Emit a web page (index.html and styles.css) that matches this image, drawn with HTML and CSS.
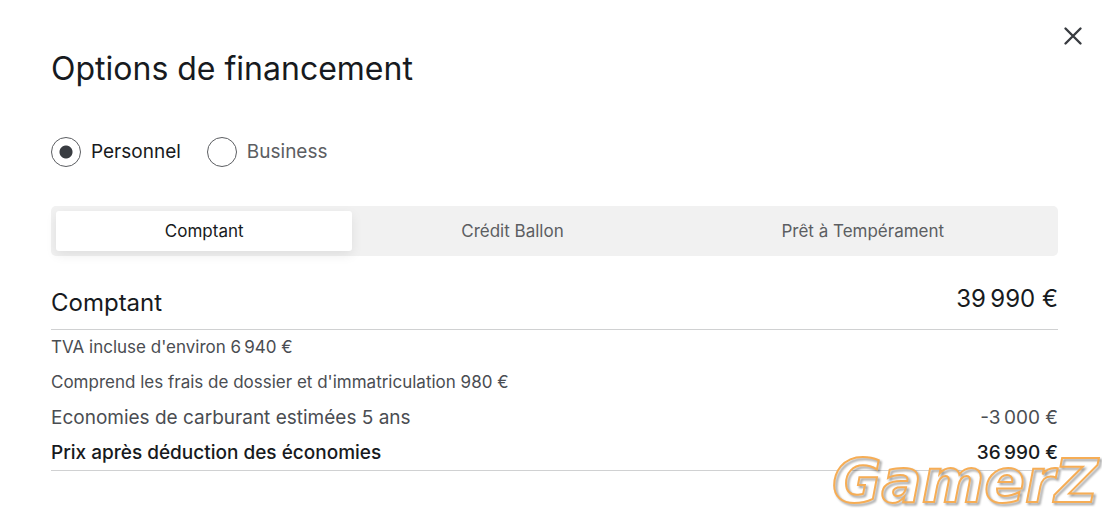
FILE: index.html
```html
<!DOCTYPE html>
<html lang="fr">
<head>
<meta charset="utf-8">
<meta name="viewport" content="width=device-width, initial-scale=1">
<title>Options de financement</title>
<link rel="stylesheet" href="styles.css">
</head>
<body>
<main class="modal">
  <button class="close" type="button" aria-label="Fermer">
    <svg viewBox="0 0 20 20" width="20" height="20" aria-hidden="true"><path d="M2.5 2.5 17.5 17.5M17.5 2.5 2.5 17.5"/></svg>
  </button>
  <h1 class="title">Options de financement</h1>
  <div class="usage" role="radiogroup" aria-label="Usage">
    <label class="choice"><input type="radio" name="usage" checked><span>Personnel</span></label>
    <label class="choice"><input type="radio" name="usage"><span>Business</span></label>
  </div>
  <div class="tabs" role="tablist">
    <button class="tab tab-active" type="button" role="tab" aria-selected="true">Comptant</button>
    <button class="tab" type="button" role="tab" aria-selected="false">Crédit Ballon</button>
    <button class="tab" type="button" role="tab" aria-selected="false">Prêt à Tempérament</button>
  </div>
  <table class="prices">
    <tbody>
      <tr class="row-head"><th scope="row">Comptant</th><td>39&#8201;990 €</td></tr>
      <tr class="row-note"><td colspan="2">TVA incluse d'environ 6&#8201;940 €</td></tr>
      <tr class="row-note"><td colspan="2">Comprend les frais de dossier et d'immatriculation 980 €</td></tr>
      <tr class="row-saving"><th scope="row">Economies de carburant estimées 5 ans</th><td>-3&#8201;000 €</td></tr>
      <tr class="row-total"><th scope="row">Prix après déduction des économies</th><td>36&#8201;990 €</td></tr>
    </tbody>
  </table>
</main>
<div class="watermark" data-text="GamerZ">GamerZ</div>
</body>
</html>
```
FILE: styles.css
```css
* { box-sizing: border-box; }
body {
  margin: 0;
  background: #fff;
  color: #171a20;
  font-family: Inter, "Liberation Sans", sans-serif;
}
.modal {
  position: relative;
  padding: 49px 44px 40px 51px;
}
.close {
  position: absolute;
  top: 26px;
  right: 19px;
  width: 20px;
  height: 20px;
  padding: 0;
  border: 0;
  background: none;
  cursor: pointer;
}
.close svg {
  display: block;
  fill: none;
  stroke: #393c41;
  stroke-width: 2.4;
  stroke-linecap: round;
}
.title {
  margin: 0;
  font-size: 32px;
  line-height: 40px;
  font-weight: 400;
}
.usage {
  display: flex;
  gap: 26px;
  margin-top: 47px;
}
.choice {
  display: flex;
  align-items: center;
  gap: 10px;
  color: #5c5e62;
  font-size: 19px;
  line-height: 32px;
  cursor: pointer;
}
.choice:has(input:checked) { color: #171a20; }
.choice input {
  appearance: none;
  width: 30px;
  height: 30px;
  margin: 0;
  border: 1px solid #5c5e62;
  border-radius: 50%;
}
.choice input:checked {
  background: radial-gradient(circle, #393c41 6px, transparent 7px);
}
.tabs {
  display: flex;
  margin-top: 38px;
  padding: 5px;
  border-radius: 5px;
  background: #f1f1f1;
}
.tab {
  flex: 1 1 auto;
  height: 40px;
  padding: 0 32px;
  border: 0;
  border-radius: 3px;
  background: none;
  color: #5c5e62;
  font: 400 17px/20px Inter, "Liberation Sans", sans-serif;
  cursor: pointer;
}
.tab-active {
  background: #fff;
  color: #171a20;
  box-shadow: 0 4px 12px rgba(0, 0, 0, 0.08);
}
.prices {
  width: 100%;
  margin-top: 24px;
  border-collapse: collapse;
}
.prices th,
.prices td {
  padding: 0;
  font-weight: 400;
  text-align: left;
}
.prices th + td { text-align: right; }
.row-head { border-bottom: 1px solid #d0d1d2; }
.row-head th,
.row-head td {
  font-size: 24px;
  line-height: 28px;
  vertical-align: top;
}
.prices .row-head th { padding: 9px 0 12px; }
.prices .row-head td { padding-top: 5px; }
.row-note,
.row-saving { color: #4a4d52; }
.row-note td {
  font-size: 17px;
  line-height: 35px;
}
.row-saving th,
.row-saving td,
.row-total th,
.row-total td {
  font-size: 19px;
  line-height: 35px;
}
.row-total { border-bottom: 1px solid #d0d1d2; }
.prices .row-total th,
.prices .row-total td { font-weight: 500; }
.watermark {
  position: absolute;
  right: 4px;
  top: 446px;
  color: #fff;
  font: italic 700 60px/70px "DejaVu Sans", sans-serif;
  pointer-events: none;
}
.watermark::after {
  content: attr(data-text);
  position: absolute;
  inset: 0;
  color: transparent;
  -webkit-text-stroke: 2px #f6ad55;
  filter: drop-shadow(2px 2px 1px rgba(0, 0, 0, 0.4));
}
```
